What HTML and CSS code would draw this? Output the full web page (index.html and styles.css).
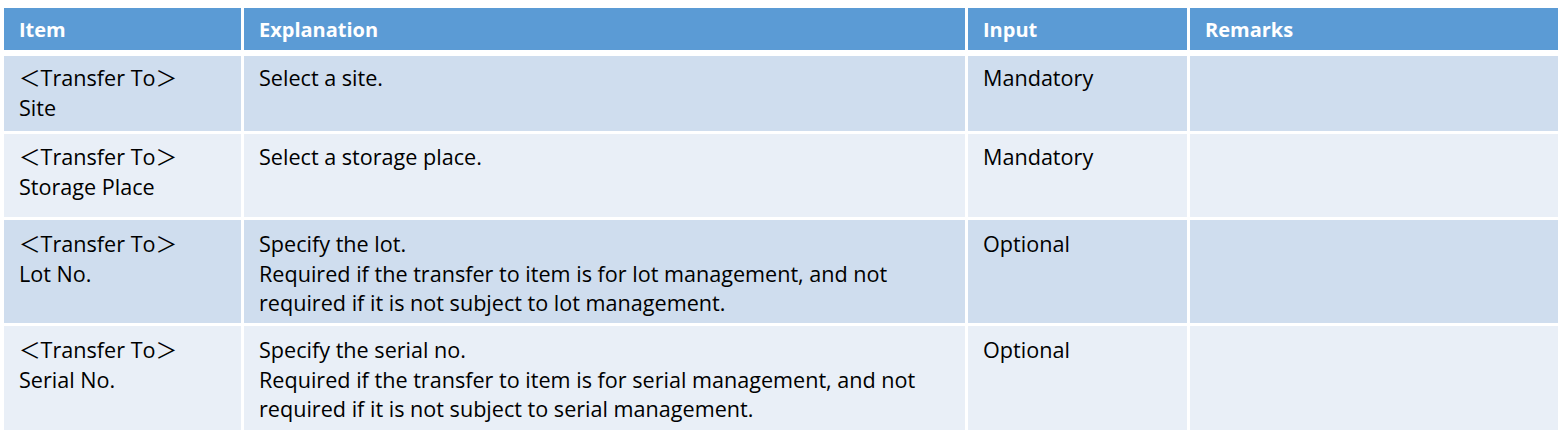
FILE: index.html
```html
<!DOCTYPE html>
<html lang="en">
<head>
<meta charset="utf-8">
<title>Transfer To</title>
<link rel="stylesheet" href="styles.css">
</head>
<body>
<div class="table">
  <div class="row thead">
    <div class="cell head">Item</div>
    <div class="cell head">Explanation</div>
    <div class="cell head">Input</div>
    <div class="cell head">Remarks</div>
  </div>
  <div class="tbody">
    <div class="row r1">
      <div class="cell odd">＜Transfer To＞<br>Site</div>
      <div class="cell odd">Select a site.</div>
      <div class="cell odd">Mandatory</div>
      <div class="cell odd"></div>
    </div>
    <div class="row r2">
      <div class="cell even">＜Transfer To＞<br>Storage Place</div>
      <div class="cell even">Select a storage place.</div>
      <div class="cell even">Mandatory</div>
      <div class="cell even"></div>
    </div>
    <div class="row r3">
      <div class="cell odd">＜Transfer To＞<br>Lot No.</div>
      <div class="cell odd">Specify the lot.<br>Required if the transfer to item is for lot management, and not<br>required if it is not subject to lot management.</div>
      <div class="cell odd">Optional</div>
      <div class="cell odd"></div>
    </div>
    <div class="row r4">
      <div class="cell even">＜Transfer To＞<br>Serial No.</div>
      <div class="cell even">Specify the serial no.<br>Required if the transfer to item is for serial management, and not<br>required if it is not subject to serial management.</div>
      <div class="cell even">Optional</div>
      <div class="cell even"></div>
    </div>
  </div>
</div>
</body>
</html>
```
FILE: styles.css
```css
html, body {
  margin: 0;
  padding: 0;
  background: #ffffff;
}
body {
  padding: 8px 9px 0 4px;
  font-family: "Open Sans", "Noto Sans CJK JP", sans-serif;
  font-size: 21.6px;
  color: #000000;
}
.table {
  width: 1554px;
  display: flex;
  flex-direction: column;
  gap: 6px;
}
.tbody {
  display: flex;
  flex-direction: column;
  gap: 3px;
}
.row {
  display: grid;
  grid-template-columns: 237px 721px 219px 1fr;
  column-gap: 3px;
}
.thead { height: 42px; }
.r1 { height: 75px; }
.r2 { height: 83px; }
.r3 { height: 103px; }
.r4 { height: 104px; }
.cell {
  padding: 7px 15px 0 15px;
  line-height: 29.5px;
  white-space: nowrap;
}
.r2 .cell { padding-top: 8px; }
.r3 .cell,
.r4 .cell { padding-top: 9px; }
.head {
  background: #5b9bd5;
  color: #ffffff;
  font-weight: bold;
  font-size: 20px;
  padding-top: 8px;
  line-height: 28px;
}
.odd {
  background: #cfddee;
}
.even {
  background: #e9eff7;
}
```
